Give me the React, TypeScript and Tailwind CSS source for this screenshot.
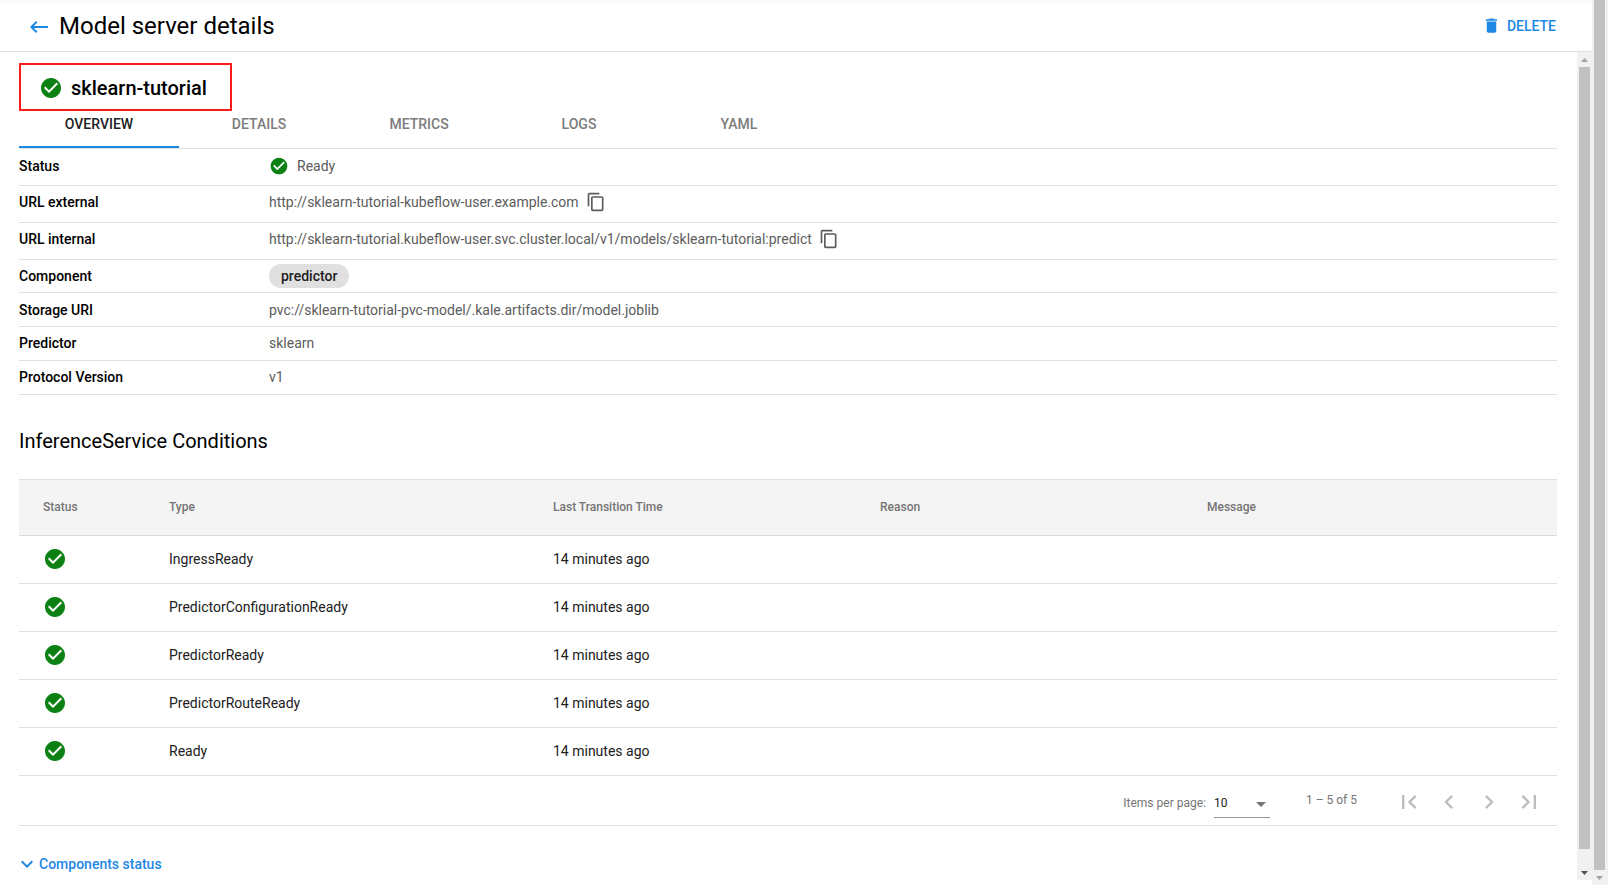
import { useState } from "react";

type Condition = {
  type: string;
  time: string;
  reason?: string;
  message?: string;
};

const tabs = ["OVERVIEW", "DETAILS", "METRICS", "LOGS", "YAML"];

const conditions: Condition[] = [
  { type: "IngressReady", time: "14 minutes ago" },
  { type: "PredictorConfigurationReady", time: "14 minutes ago" },
  { type: "PredictorReady", time: "14 minutes ago" },
  { type: "PredictorRouteReady", time: "14 minutes ago" },
  { type: "Ready", time: "14 minutes ago" },
];

const pageButtons = [
  {
    label: "First page",
    path: "M18.41 16.59L13.82 12l4.59-4.59L17 6l-6 6 6 6zM6 6h2v12H6z",
  },
  {
    label: "Previous page",
    path: "M15.41 7.41L14 6l-6 6 6 6 1.41-1.41L10.83 12z",
  },
  {
    label: "Next page",
    path: "M10 6L8.59 7.41 13.17 12l-4.58 4.59L10 18l6-6z",
  },
  {
    label: "Last page",
    path: "M5.59 7.41L10.18 12l-4.59 4.59L7 18l6-6-6-6zM16 6h2v12h-2z",
  },
];

const Icon = ({ path, className }: { path: string; className: string }) => (
  <svg viewBox="0 0 24 24" fill="currentColor" className={className}>
    <path d={path} />
  </svg>
);

const CheckIcon = ({ className }: { className: string }) => (
  <Icon
    className={`shrink-0 text-[#0b8013] ${className}`}
    path="M12 2C6.48 2 2 6.48 2 12s4.48 10 10 10 10-4.48 10-10S17.52 2 12 2zm-2 15l-5-5 1.41-1.41L10 14.17l7.59-7.59L19 8l-9 9z"
  />
);

const CopyButton = ({ text }: { text: string }) => (
  <button
    type="button"
    aria-label="Copy"
    className="ml-[7px] cursor-pointer"
    onClick={() => navigator.clipboard?.writeText(text)}
  >
    <Icon
      className="size-5"
      path="M16 1H4c-1.1 0-2 .9-2 2v14h2V3h12V1zm3 4H8c-1.1 0-2 .9-2 2v14c0 1.1.9 2 2 2h11c1.1 0 2-.9 2-2V7c0-1.1-.9-2-2-2zm0 16H8V7h11v14z"
    />
  </button>
);

const Row = ({
  label,
  className,
  children,
}: {
  label: string;
  className: string;
  children: React.ReactNode;
}) => (
  <div
    className={`flex items-center border-b border-[#e0e0e0] text-sm ${className}`}
  >
    <dt className="w-[250px] shrink-0 font-medium text-black">{label}</dt>
    <dd className="flex items-center text-[#5c5c5c]">{children}</dd>
  </div>
);

const Arrow = ({ path, className }: { path: string; className: string }) => (
  <svg
    viewBox="0 0 15 15"
    fill="currentColor"
    className={`size-[15px] shrink-0 ${className}`}
  >
    <path d={path} />
  </svg>
);

const arrowUp = "M4 10h7L7.5 6z";
const arrowDown = "M4 6h7L7.5 10z";

const externalUrl = "http://sklearn-tutorial-kubeflow-user.example.com";
const internalUrl =
  "http://sklearn-tutorial.kubeflow-user.svc.cluster.local/v1/models/sklearn-tutorial:predict";

export default function App() {
  const [tab, setTab] = useState("OVERVIEW");

  return (
    <div className="flex h-screen overflow-hidden bg-white font-[Roboto,'Liberation_Sans',sans-serif] text-black">
      <div className="flex min-w-0 grow flex-col">
        <header className="flex h-[52px] shrink-0 items-center border-b border-[#e0e0e0] bg-linear-to-b from-[#f8f8f8] to-white to-10% pr-9 pl-[27px]">
          <button
            type="button"
            aria-label="Back"
            className="cursor-pointer pt-0.5 text-[#1e88e5]"
          >
            <Icon
              className="size-6"
              path="M21 11H6.83l3.58-3.59L9 6l-6 6 6 6 1.41-1.41L6.83 13H21z"
            />
          </button>
          <h1 className="ml-2 text-2xl">Model server details</h1>
          <button
            type="button"
            className="ml-auto flex cursor-pointer items-center gap-1.5 text-sm font-medium text-[#1e88e5]"
          >
            <Icon
              className="size-[19px]"
              path="M6 19c0 1.1.9 2 2 2h8c1.1 0 2-.9 2-2V7H6v12zM19 4h-3.500l-1-1h-5l-1 1H5v2h14V4z"
            />
            DELETE
          </button>
        </header>

        <div className="mb-[5px] flex min-h-0 grow">
          <main className="min-w-0 grow overflow-hidden pr-5 pl-[19px]">
            <div className="mt-[11px] flex h-12 w-[213px] items-center gap-2 border-2 border-[#ff1a1a] pt-0.5 pl-[18px]">
              <CheckIcon className="size-6" />
              <h2 className="text-xl font-medium">sklearn-tutorial</h2>
            </div>

            <div role="tablist" className="flex border-b border-[#e0e0e0]">
              {tabs.map((name) => (
                <button
                  key={name}
                  type="button"
                  role="tab"
                  aria-selected={tab === name}
                  onClick={() => setTab(name)}
                  className={`h-[37px] w-40 cursor-pointer border-b-2 pb-2.5 text-sm font-medium ${
                    tab === name
                      ? "border-[#1e88e5] text-[#212121]"
                      : "border-transparent text-[#7c7c7c]"
                  }`}
                >
                  {name}
                </button>
              ))}
            </div>

            <dl>
              <Row label="Status" className="h-[37px] pb-0.5">
                <CheckIcon className="mr-2 size-5" />
                Ready
              </Row>
              <Row label="URL external" className="h-[37px] pb-1">
                {externalUrl}
                <CopyButton text={externalUrl} />
              </Row>
              <Row label="URL internal" className="h-[37px] pb-1">
                {internalUrl}
                <CopyButton text={internalUrl} />
              </Row>
              <Row label="Component" className="h-[33px]">
                <span className="rounded-full bg-[#e0e0e0] px-3 py-0.5 font-medium text-[#212121]">
                  predictor
                </span>
              </Row>
              <Row label="Storage URI" className="h-[34px]">
                pvc://sklearn-tutorial-pvc-model/.kale.artifacts.dir/model.joblib
              </Row>
              <Row label="Predictor" className="h-[34px] pb-0.5">
                sklearn
              </Row>
              <Row label="Protocol Version" className="h-[34px] pb-0.5">
                v1
              </Row>
            </dl>

            <h3 className="mt-8 mb-6 text-xl">InferenceService Conditions</h3>

            <table className="w-full table-fixed border-t border-[#e0e0e0] text-left text-sm text-[#212121]">
              <thead className="bg-[#f4f4f4] text-xs text-[#757575]">
                <tr className="h-14 border-b border-[#dadada] *:pb-0.5 *:font-medium">
                  <th className="w-[150px] pl-6">Status</th>
                  <th className="w-[384px]">Type</th>
                  <th className="w-[327px]">Last Transition Time</th>
                  <th className="w-[327px]">Reason</th>
                  <th>Message</th>
                </tr>
              </thead>
              <tbody>
                {conditions.map((condition) => (
                  <tr
                    key={condition.type}
                    className="h-12 border-b border-[#e0e0e0] *:pb-0.5"
                  >
                    <td className="pl-6">
                      <CheckIcon className="size-6" />
                    </td>
                    <td>{condition.type}</td>
                    <td>{condition.time}</td>
                    <td>{condition.reason}</td>
                    <td>{condition.message}</td>
                  </tr>
                ))}
              </tbody>
            </table>

            <div className="flex h-[50px] items-center justify-end border-b border-[#e0e0e0] pt-0.5 pr-2 text-xs text-[#757575]">
              <label htmlFor="page-size" className="pt-0.5">
                Items per page:
              </label>
              <div className="relative mt-1 ml-2">
                <select
                  id="page-size"
                  defaultValue="10"
                  className="h-7 w-14 appearance-none border-b border-[#949494] text-[#212121]"
                >
                  <option>5</option>
                  <option>10</option>
                  <option>25</option>
                </select>
                <Icon
                  className="pointer-events-none absolute top-0.5 right-[-3px] size-6"
                  path="M7 10l5 5 5-5z"
                />
              </div>
              <span className="mr-8 ml-9 pb-1">1 – 5 of 5</span>
              {pageButtons.map((button) => (
                <button
                  key={button.label}
                  type="button"
                  aria-label={button.label}
                  disabled
                  className="flex size-10 items-center justify-center text-[#bdbdbd]"
                >
                  <Icon className="size-7" path={button.path} />
                </button>
              ))}
            </div>

            <button
              type="button"
              className="mt-[26px] -ml-1 flex cursor-pointer items-center text-sm font-medium text-[#1e88e5]"
            >
              <Icon
                className="size-6"
                path="M7.41 8.59L12 13.17l4.59-4.58L18 10l-6 6-6-6z"
              />
              Components status
            </button>
          </main>

          <div
            aria-hidden="true"
            className="flex w-[15px] shrink-0 flex-col items-center bg-[#f1f1f1]"
          >
            <Arrow path={arrowUp} className="text-[#a3a3a3]" />
            <div className="w-[11px] grow bg-[#c1c1c1]" />
            <Arrow path={arrowDown} className="mt-4 text-[#505050]" />
          </div>
        </div>
      </div>

      <div
        aria-hidden="true"
        className="flex w-4 shrink-0 flex-col items-center bg-[#f1f1f1] pr-px"
      >
        <div className="w-[11px] grow bg-[#c1c1c1]" />
        <Arrow path={arrowDown} className="text-[#a3a3a3]" />
      </div>
    </div>
  );
}
